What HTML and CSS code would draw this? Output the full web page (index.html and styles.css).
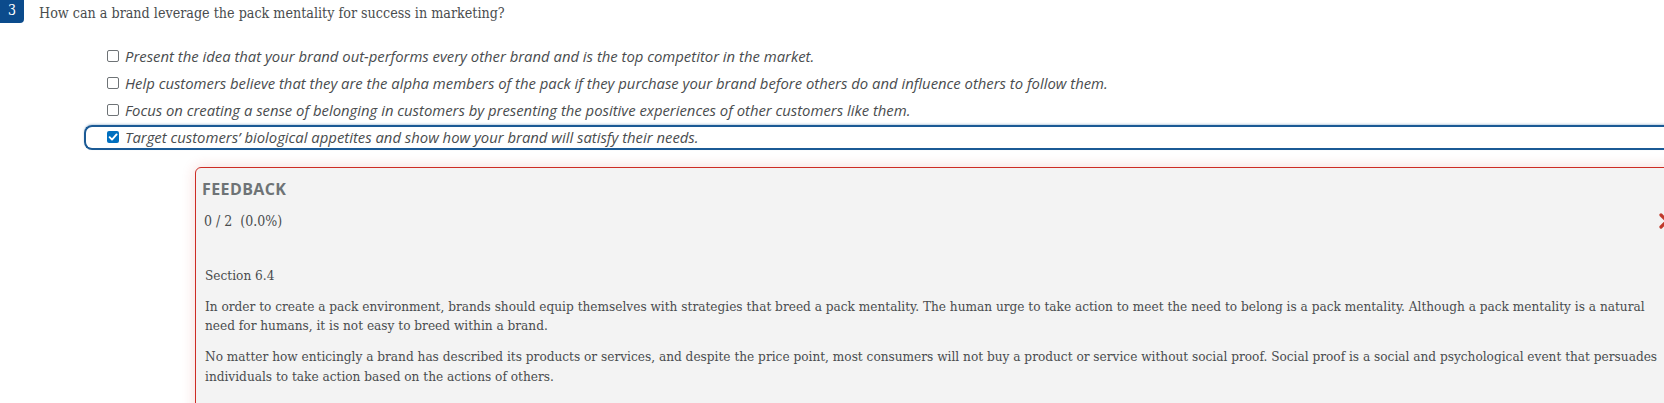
FILE: index.html
```html
<!DOCTYPE html>
<html lang="en">
<head>
<meta charset="utf-8">
<title>Quiz question</title>
<link rel="stylesheet" href="styles.css">
</head>
<body>
<div class="page">
  <div class="question">
    <div class="badge">3</div>
    <div class="qtext">How can a brand leverage the pack mentality for success in marketing?</div>
  </div>
  <ul class="options">
    <li class="opt"><span class="box"></span><span class="otext">Present the idea that your brand out-performs every other brand and is the top competitor in the market.</span></li>
    <li class="opt"><span class="box"></span><span class="otext">Help customers believe that they are the alpha members of the pack if they purchase your brand before others do and influence others to follow them.</span></li>
    <li class="opt"><span class="box"></span><span class="otext">Focus on creating a sense of belonging in customers by presenting the positive experiences of other customers like them.</span></li>
    <li class="opt selected"><span class="box checked"><svg viewBox="0 0 12 12" width="12" height="12"><path d="M2.6 6.2 L5 8.6 L9.6 3.4" fill="none" stroke="#fff" stroke-width="1.9" stroke-linecap="round" stroke-linejoin="round"/></svg></span><span class="otext">Target customers’ biological appetites and show how your brand will satisfy their needs.</span></li>
  </ul>
  <div class="feedback">
    <div class="fb-head">
      <div class="fb-title">FEEDBACK</div>
      <div class="fb-row">
        <div class="score">0 / 2&nbsp; (0.0%)</div>
        <svg class="xicon" viewBox="0 0 18 18" width="18" height="18"><path d="M3 3 L15 15 M15 3 L3 15" stroke="#c0392b" stroke-width="3.2" stroke-linecap="round"/></svg>
      </div>
    </div>
    <div class="fb-body">
      <p>Section 6.4</p>
      <p>In order to create a pack environment, brands should equip themselves with strategies that breed a pack mentality. The human urge to take action to meet the need to belong is a pack mentality. Although a pack mentality is a natural need for humans, it is not easy to breed within a brand.</p>
      <p>No matter how enticingly a brand has described its products or services, and despite the price point, most consumers will not buy a product or service without social proof. Social proof is a social and psychological event that persuades individuals to take action based on the actions of others.</p>
    </div>
  </div>
</div>
</body>
</html>
```

FILE: styles.css
```css
html, body {
  margin: 0;
  padding: 0;
  background: #ffffff;
  overflow: hidden;
}
.page {
  width: 1700px;
  font-family: "DejaVu Serif Condensed", "DejaVu Serif", serif;
  font-stretch: condensed;
  color: #494c4e;
}
.question {
  display: flex;
  align-items: flex-start;
  height: 43.5px;
}
.badge {
  width: 24px;
  height: 23px;
  background: #0b4b8c;
  color: #fff;
  border-bottom-right-radius: 4px;
  font-size: 14px;
  line-height: 21px;
  text-align: center;
}
.qtext {
  margin-left: 15px;
  font-size: 14.2px;
  line-height: 26px;
}
.options {
  list-style: none;
  margin: 0 0 0 84px;
  padding: 0;
}
.opt {
  display: flex;
  align-items: center;
  height: 21px;
  margin-bottom: 2px;
  padding-left: 21px;
  border: 2px solid transparent;
  border-right: none;
  border-radius: 8px 0 0 8px;
}
.opt.selected {
  border-color: #1b5a95;
  box-shadow: 0 -1px 2px rgba(31, 95, 155, 0.3);
}
.box {
  flex: none;
  width: 12px;
  height: 12px;
  box-sizing: border-box;
  border: 1.5px solid #6e7376;
  border-radius: 2px;
  background: #fff;
  display: flex;
  align-items: center;
  justify-content: center;
}
.box.checked {
  border: none;
  background: #006fbf;
}
.otext {
  margin-left: 6px;
  font-family: "Open Sans", "Liberation Sans", sans-serif;
  font-stretch: normal;
  font-style: italic;
  font-size: 14.85px;
  color: #494c4e;
  white-space: nowrap;
}
.feedback {
  margin: 17.5px 0 0 195px;
  width: 1490px;
  min-height: 260px;
  background: #f3f3f3;
  border: 1px solid #cd2c24;
  border-radius: 6px;
  box-shadow: 0 0 14px rgba(205, 44, 36, 0.18);
  padding: 7px 8px 0 6px;
  box-sizing: border-box;
}
.fb-title {
  font-family: "Open Sans", "Liberation Sans", sans-serif;
  font-stretch: normal;
  font-weight: 700;
  font-size: 16px;
  letter-spacing: 0.4px;
  color: #6e7376;
  line-height: 28px;
}
.fb-row {
  display: flex;
  align-items: center;
  justify-content: space-between;
  height: 20px;
  margin-top: 8px;
}
.score {
  padding-left: 2px;
  font-size: 14px;
  line-height: 20px;
}
.fb-body {
  padding: 35px 0 0 3px;
  font-size: 13.5px;
  line-height: 19.7px;
}
.fb-body p {
  margin: 0 0 11px 0;
  width: 1455px;
}
```
